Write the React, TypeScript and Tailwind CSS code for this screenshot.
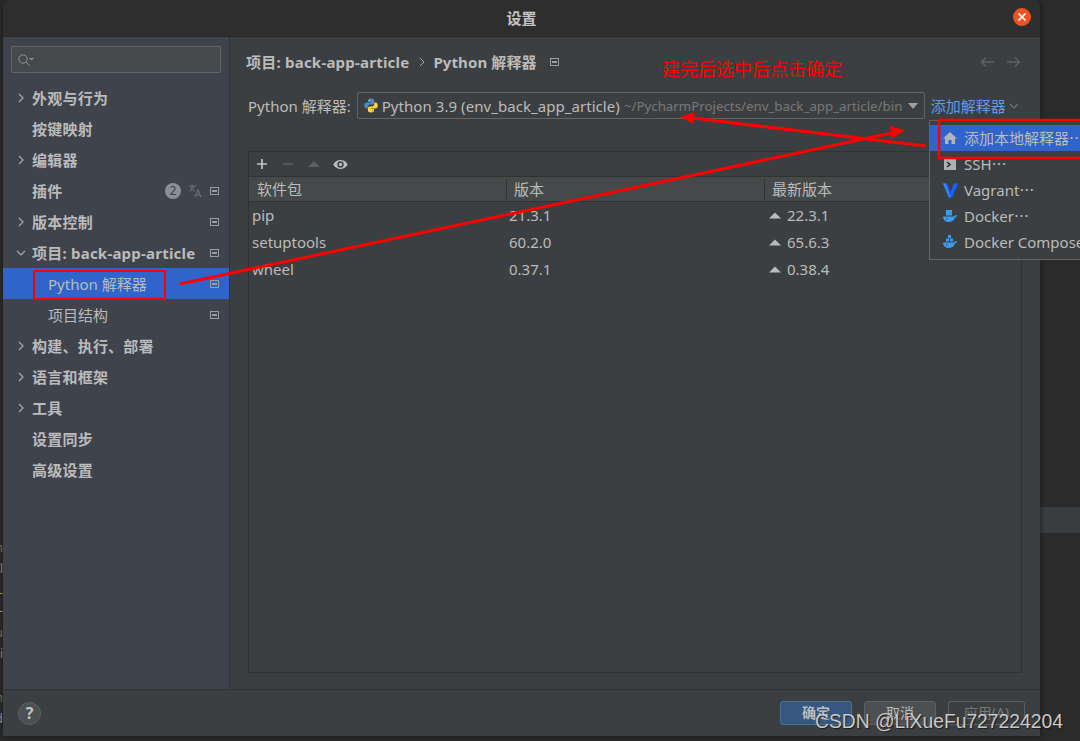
import React from "react";

const Scope = () => (
  <svg width="9" height="8" viewBox="0 0 9 8" className="shrink-0">
    <rect x="0.5" y="0.5" width="8" height="7" fill="none" stroke="#9a9da0" />
    <rect x="2" y="3" width="5" height="2" fill="#9a9da0" />
  </svg>
);

const Chevron = ({ down }: { down?: boolean }) => (
  <svg width="10" height="10" viewBox="0 0 10 10" className="shrink-0">
    <path d={down ? "M1 3l4 4 4-4" : "M3 1l4 4-4 4"} fill="none" stroke="#a8abad" strokeWidth="1.2" />
  </svg>
);

const Whale = ({ compose }: { compose?: boolean }) => (
  <svg width="16" height="16" viewBox="0 0 16 16" className="shrink-0">
    {compose ? (
      <path d="M6 1h3v3H6zM4 4.500h3v3H4zM8 4.500h3v3H8z" fill="#3d9be9" />
    ) : (
      <path d="M4 2h6v5.500H4z" fill="#3d9be9" />
    )}
    <path d="M1 8.500h11c.5-1 1.500-1.500 3-1-.3 1.200-1 1.800-2 2-1 3-3.500 4.500-6.500 4.500C3 14 1.200 11.500 1 8.500z" fill="#3d9be9" />
    <circle cx="5" cy="11" r=".7" fill="#3c3f41" />
  </svg>
);

const PythonLogo = () => (
  <svg width="14" height="15" viewBox="0 0 14 15" className="shrink-0">
    <path d="M7 .5C4.500.5 4 1.500 4 2.500V4h3.200v.6H2.500C1 4.600.3 5.800.3 7.500S1 10.500 2.500 10.500H3.700V8.800c0-1.200 1-2.200 2.200-2.200h2.500c1 0 1.700-.8 1.700-1.800V2.500C10.100 1.300 9 .5 7 .5z" fill="#4b8bbe" />
    <path d="M7 14.500c2.500 0 3-1 3-2V11H6.800v-.6h4.700c1.500 0 2.200-1.200 2.200-2.900s-.7-3-2.200-3h-1.200v1.700c0 1.200-1 2.200-2.200 2.200H5.600c-1 0-1.700.8-1.700 1.800v2.300c0 1.200 1.100 2 3.100 2z" fill="#ffd43b" />
    <circle cx="5.500" cy="2.300" r=".6" fill="#ddd" />
    <circle cx="8.500" cy="12.700" r=".6" fill="#777" />
  </svg>
);

const Dots = () => <span className="font-['Noto_Sans_CJK_SC']">…</span>;

const sidebar: { label: string; chevron?: "r" | "d"; bold?: boolean; scope?: boolean; child?: boolean; selected?: boolean; badge?: boolean }[] = [
  { label: "外观与行为", chevron: "r", bold: true },
  { label: "按键映射", bold: true },
  { label: "编辑器", chevron: "r", bold: true },
  { label: "插件", bold: true, badge: true, scope: true },
  { label: "版本控制", chevron: "r", bold: true, scope: true },
  { label: "项目: back-app-article", chevron: "d", bold: true, scope: true },
  { label: "Python 解释器", child: true, selected: true, scope: true },
  { label: "项目结构", child: true, scope: true },
  { label: "构建、执行、部署", chevron: "r", bold: true },
  { label: "语言和框架", chevron: "r", bold: true },
  { label: "工具", chevron: "r", bold: true },
  { label: "设置同步", bold: true },
  { label: "高级设置", bold: true },
];

const packages = [
  ["pip", "21.3.1", "22.3.1"],
  ["setuptools", "60.2.0", "65.6.3"],
  ["wheel", "0.37.1", "0.38.4"],
];

const edge = [
  ["n", "mt-[539px]", "text-[#a9825a]"],
  ["l", "mt-[4px]", "text-[#c9a96a]"],
  ["-", "mt-[7px]", "text-[#c9a96a]"],
  ["-", "mt-[1px]", "text-[#bbbbbb]"],
  ["u", "mt-[5px]", "text-[#a9825a]"],
  ["i", "mt-[4px]", "text-[#c9a96a]"],
  ["n", "mt-[27px]", "text-[#a9825a]"],
  ["d", "mt-[4px]", "text-[#a9a9a9]"],
];

export default function App() {
  return (
    <div
      className="relative flex h-[741px] w-[1080px] overflow-hidden bg-[#2b2b2b] text-[15px] leading-[20px] text-[#bbbbbb]"
      style={{ fontFamily: '"Noto Sans", "Noto Sans CJK SC", sans-serif' }}
    >
      <div className="flex w-[3px] shrink-0 flex-col items-end overflow-hidden text-[12px] leading-[17px]">
        {edge.map(([c, m, col], i) => (
          <span key={i} className={`${m} ${col} block`}>{c}</span>
        ))}
      </div>

      <div className="relative z-10 flex h-[736px] w-[1037px] shrink-0 flex-col rounded-t-[7px] bg-[#3c3f41] shadow-[0_0_5px_#161616]">
        <header className="relative flex h-[37px] shrink-0 items-center justify-center rounded-t-[7px] border-b border-[#292929] bg-[#2f2e2e]">
          <span className="font-bold text-[#c4c4c4]">设置</span>
          <span className="absolute right-[9px] top-[8px] flex h-[18px] w-[18px] items-center justify-center rounded-full bg-[#e95420]">
            <svg width="10" height="10" viewBox="0 0 10 10">
              <path d="M1.500 1.500l7 7M8.500 1.500l-7 7" stroke="#fff" strokeWidth="1.700" />
            </svg>
          </span>
        </header>

        <div className="flex min-h-0 flex-1">
          <aside className="w-[227px] shrink-0 border-r border-[#323232] bg-[#3f434c]">
            <div className="mx-[8px] mt-[9px] flex h-[27px] items-center rounded-[2px] border border-[#646464] bg-[#45494a] pl-[5px]">
              <svg width="18" height="14" viewBox="0 0 18 14">
                <circle cx="6" cy="6" r="4.200" fill="none" stroke="#8f9295" />
                <path d="M9 9l3.500 3.500" stroke="#8f9295" />
                <path d="M12 5h5l-2.500 2.500z" fill="#8f9295" />
              </svg>
            </div>
            <nav className="mt-[9px]">
              {sidebar.map((r) => (
                <div
                  key={r.label}
                  className={`flex h-[31px] items-center pr-[10px] ${r.selected ? "bg-[#2f65ca]" : ""}`}
                >
                  <span className="flex w-[29px] shrink-0 justify-end pr-[6px]">
                    {r.chevron && <Chevron down={r.chevron === "d"} />}
                  </span>
                  <span className={`${r.bold ? "font-bold tracking-[0.22px]" : ""} ${r.child ? "pl-[16px]" : ""} whitespace-nowrap`}>
                    {r.label}
                  </span>
                  <span className="ml-auto flex items-center gap-[7px]">
                    {r.badge && (
                      <>
                        <span className="flex h-[16px] w-[16px] items-center justify-center rounded-full bg-[#8b9097] text-[12px] text-[#3c3f41]">2</span>
                        <svg width="14" height="14" viewBox="0 0 14 14" className="mr-[1px]">
                          <path d="M1 2h7M4.500 1v1M2 7c2-1 3.500-3 4-5M2.500 3.500C3.500 5.500 5 6.500 7 7M7 13l3-7 3 7M8 11h4" fill="none" stroke="#6e7276" strokeWidth="1.100" />
                        </svg>
                      </>
                    )}
                    {r.scope && <Scope />}
                  </span>
                </div>
              ))}
            </nav>
          </aside>

          <main className="flex min-w-0 flex-1 flex-col px-[18px] pb-[16px]">
            <div className="flex h-[50px] shrink-0 items-center">
              <span className="-ml-[2px] font-bold tracking-[0.22px]">项目: back-app-article</span>
              <span className="ml-[9px] mr-[6px]">
                <svg width="8" height="10" viewBox="0 0 8 10"><path d="M2 1l4 4-4 4" fill="none" stroke="#a8abad" /></svg>
              </span>
              <span className="ml-[1px] font-bold tracking-[0.1px]">Python 解释器</span>
              <span className="ml-[13px]"><Scope /></span>
              <span className="ml-auto flex gap-[13px] pr-[1px]">
                <svg width="14" height="12" viewBox="0 0 14 12"><path d="M14 6H1.500M6 1.500L1.500 6 6 10.500" fill="none" stroke="#5d6063" strokeWidth="1.500" /></svg>
                <svg width="14" height="12" viewBox="0 0 14 12"><path d="M0 6h12.500M8 1.500L12.500 6 8 10.500" fill="none" stroke="#5d6063" strokeWidth="1.500" /></svg>
              </span>
            </div>

            <div className="mt-[5px] flex h-[27px] shrink-0 items-center">
              <span className="whitespace-nowrap">Python 解释器:</span>
              <div className="ml-[6px] flex h-[27px] w-[568px] items-center rounded-[2px] border border-[#646464] pl-[6px] pr-[4px]">
                <PythonLogo />
                <span className="ml-[4px] whitespace-nowrap tracking-[0.06px]">Python 3.9 (env_back_app_article)</span>
                <span className="ml-[4px] min-w-0 flex-1 overflow-hidden whitespace-nowrap text-[13.3px] text-[#787878]">~/PycharmProjects/env_back_app_article/bin</span>
                <svg width="10" height="6" viewBox="0 0 10 6" className="ml-[4px] mr-[2px] shrink-0"><path d="M0 0h10L5 6z" fill="#a0a0a0" /></svg>
              </div>
              <span className="ml-[6px] whitespace-nowrap text-[#5c9be8]">添加解释器</span>
              <span className="ml-[3px]"><svg width="10" height="6" viewBox="0 0 10 6"><path d="M1 1l4 4 4-4" fill="none" stroke="#6c7074" strokeWidth="1.300" /></svg></span>
            </div>

            <section className="mt-[32px] flex min-h-0 w-[774px] flex-1 flex-col border border-[#323232]">
              <div className="flex h-[25px] shrink-0 items-center border-b border-[#323232]">
                <span className="flex w-[26px] justify-center"><svg width="12" height="12" viewBox="0 0 12 12"><path d="M6 1v10M1 6h10" stroke="#c4c4c4" strokeWidth="1.700" /></svg></span>
                <span className="flex w-[26px] justify-center"><svg width="12" height="12" viewBox="0 0 12 12"><path d="M1 6h10" stroke="#5d6063" strokeWidth="1.700" /></svg></span>
                <span className="flex w-[26px] justify-center"><svg width="14" height="12" viewBox="0 0 14 12"><path d="M1 9l6-6 6 6z" fill="#5d6063" /></svg></span>
                <span className="flex w-[26px] justify-center">
                  <svg width="15" height="11" viewBox="0 0 14 10">
                    <path d="M0.300 5C3 -.5 11 -.5 13.700 5 11 10.500 3 10.500 0.300 5z" fill="#bbbbbb" />
                    <circle cx="7" cy="5" r="3" fill="#3c3f41" />
                    <circle cx="7" cy="5" r="1.600" fill="#bbbbbb" />
                  </svg>
                </span>
              </div>
              <div className="grid h-[25px] shrink-0 grid-cols-[257px_258px_1fr] items-center border-b border-[#323232] bg-[#45494a]">
                <span className="pl-[8px]">软件包</span>
                <span className="border-l border-[#323232] pl-[7px]">版本</span>
                <span className="border-l border-[#323232] pl-[7px]">最新版本</span>
              </div>
              {packages.map(([n, v, l]) => (
                <div key={n} className="grid h-[27px] shrink-0 grid-cols-[257px_258px_1fr] items-center pb-[1px]">
                  <span className="pl-[3px]">{n}</span>
                  <span className="pl-[3px]">{v}</span>
                  <span className="flex items-center pl-[5px]">
                    <svg width="12" height="7" viewBox="0 0 12 7" className="mr-[6px]"><path d="M0 6.500L6 .5l6 6z" fill="#bbbbbb" /></svg>
                    {l}
                  </span>
                </div>
              ))}
            </section>
          </main>
        </div>

        <footer className="flex h-[47px] shrink-0 items-center border-t border-[#323232] pl-[15px] pr-[15px]">
          <span className="flex h-[23px] w-[23px] items-center justify-center rounded-full border border-[#5e6163] bg-[#4c5052] text-[16px] font-bold text-[#c4c4c4]">?</span>
          <div className="ml-auto flex gap-[12px]">
            <button className="h-[24px] w-[72px] rounded-[3px] border border-[#4c708c] bg-[#365880] text-[14px] font-bold leading-[22px] text-[#bbbbbb]">确定</button>
            <button className="h-[24px] w-[72px] rounded-[3px] border border-[#5e6060] bg-[#4c5052] text-[14px] leading-[22px]">取消</button>
            <button className="h-[24px] w-[77px] rounded-[3px] border border-[#5e6060] text-[14px] leading-[22px] text-[#777777]">应用(A)</button>
          </div>
        </footer>
      </div>

      <div className="flex-1 pt-[507px]">
        <div className="h-[26px] bg-[#3a3d40]" />
      </div>

      <div className="absolute left-[929px] top-[120px] z-20 h-[140px] w-[170px] overflow-hidden border border-[#646464] bg-[#3c3f41] pt-[4px]">
        <div className="flex h-[26px] items-center whitespace-nowrap bg-[#2f65ca] pl-[13px]">
          <svg width="14" height="12" viewBox="0 0 14 12" className="mr-[7px]"><path d="M7 0l7 6.500h-2V12H8.500V8h-3v4H2V6.500H0z" fill="#aeb4bb" /></svg>
          添加本地解释器<Dots />
        </div>
        <div className="flex h-[26px] items-center whitespace-nowrap pl-[14px]">
          <svg width="12" height="11" viewBox="0 0 12 11" className="mr-[8px]"><rect width="12" height="11" fill="#aeb1b3" /><path d="M3 3l3 2.500L3 8" fill="none" stroke="#2b2b2b" strokeWidth="1.500" /></svg>
          SSH<Dots />
        </div>
        <div className="flex h-[26px] items-center whitespace-nowrap pl-[13px]">
          <svg width="15" height="15" viewBox="0 0 14 14" className="mr-[6px]"><path d="M0 .5h4l3 8.500 3-8.500h4L8.500 13.500h-3z" fill="#1563ff" /><path d="M0 .5h2.500L7 13.500H5.500z" fill="#3a86f0" /></svg>
          Vagrant<Dots />
        </div>
        <div className="flex h-[26px] items-center whitespace-nowrap pl-[12px]"><span className="mr-[6px]"><Whale /></span>Docker<Dots /></div>
        <div className="flex h-[26px] items-center gap-[6px] whitespace-nowrap pl-[12px]"><Whale compose />Docker Compose</div>
      </div>

      <svg className="pointer-events-none absolute left-0 top-0 z-30" width="1080" height="741" viewBox="0 0 1080 741">
        <rect x="34" y="271" width="131" height="28" fill="none" stroke="#ff0000" strokeWidth="2" />
        <rect x="939" y="120" width="150" height="38" fill="none" stroke="#ff0000" strokeWidth="2.500" />
        <path d="M180 284L892 133" stroke="#ff0000" strokeWidth="3" />
        <path d="M905 130L889 126 892 133 891 139z" fill="#ff0000" />
        <path d="M926 146L692 118" stroke="#ff0000" strokeWidth="3" />
        <path d="M680 117L695 112 693 118 694 124z" fill="#ff0000" />
      </svg>

      <span className="absolute left-[662px] top-[56px] z-30 whitespace-nowrap text-[18px] leading-[24px] text-[#ff0000]" style={{ fontFamily: '"Noto Sans CJK SC", sans-serif' }}>建完后选中后点击确定</span>
      <span className="absolute left-[815px] top-[710px] z-30 whitespace-nowrap text-[19.3px] leading-[24px] text-[#c8c8c8] [text-shadow:1px_1px_1px_#1c1c1c]" style={{ fontFamily: '"Liberation Sans", sans-serif' }}>CSDN @LiXueFu727224204</span>
    </div>
  );
}
